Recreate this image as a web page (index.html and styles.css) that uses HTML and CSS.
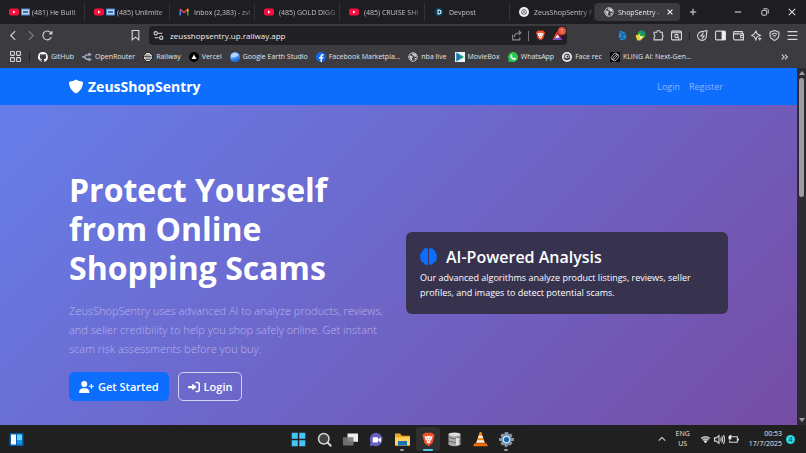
FILE: index.html
```html
<!DOCTYPE html>
<html lang="en">
<head>
<meta charset="utf-8">
<meta name="viewport" content="width=device-width, initial-scale=1">
<title>ZeusShopSentry</title>
<link rel="stylesheet" href="styles.css">
</head>
<body>
<svg class="defs" aria-hidden="true">
  <symbol id="yt" viewBox="0 0 20 14"><rect width="20" height="14" rx="4" fill="#f5103f"/><path d="M8 4l5 3-5 3z" fill="#fff"/></symbol>
  <symbol id="tv" viewBox="0 0 18 14"><rect width="18" height="14" rx="1" fill="#4a86cf"/><rect x="2" y="2" width="14" height="10" fill="#b9d3ee"/><path d="M4 5h10v4H4z" fill="#416fa8"/></symbol>
  <symbol id="globe" viewBox="0 0 20 20"><circle cx="10" cy="10" r="8.5" fill="#3b3b40" stroke="#c4c6ca" stroke-width="2"/><path d="M2 8l5-1 3 3-2 3 1 5-4-3zM9 2l7 2 2 5-5 1-2-3-3-1zM13 12l4 0-3 5z" fill="#c4c6ca"/></symbol>
  <symbol id="brave" viewBox="0 0 20 22"><path d="M5 1h10l2 2 2 1-1 4-2 8-6 5-6-5-2-8-1-4 2-1z" fill="#f4502a"/><path d="M4 6l3 .5 3-1 3 1L16 6l-2 6-2 1 1 2-3 2-3-2 1-2-2-1z" fill="#fff"/><path d="M7 8l2 1-1 2zM13 8l-2 1 1 2zM9 12h2l-1 2z" fill="#f4502a"/></symbol>
</svg>

<header class="browser">
  <div class="tabstrip">
    <div class="tab"><svg class="fav"><use href="#yt"/></svg><svg class="fav tv"><use href="#tv"/></svg><span class="title">(481) He Built</span></div>
    <div class="tab"><svg class="fav"><use href="#yt"/></svg><svg class="fav tv"><use href="#tv"/></svg><span class="title">(485) Unlimite</span></div>
    <div class="tab"><svg class="fav" viewBox="0 0 20 16"><path d="M1 15V3l3 0v12z" fill="#4285f4"/><path d="M16 15V3h3v12z" fill="#34a853"/><path d="M1 3l2-2 7 6 7-6 2 2-9 8z" fill="#ea4335"/><path d="M16 3l2-2 1 2v3l-3 2z" fill="#fbbc04"/></svg><span class="title wide">Inbox (2,383) - zvi</span></div>
    <div class="tab"><svg class="fav"><use href="#yt"/></svg><span class="title wide">(485) GOLD DIGG</span></div>
    <div class="tab"><svg class="fav"><use href="#yt"/></svg><span class="title wide">(485) CRUISE SHI</span></div>
    <div class="tab"><svg class="fav" viewBox="0 0 20 20"><path d="M5 1h10l5 9-5 9H5L0 10z" fill="#003e54"/><path d="M7 5h3a5 5 0 010 10H7zM9 7v6h1a3 3 0 000-6z" fill="#fff"/></svg><span class="title wide">Devpost</span></div>
    <div class="tab"><svg class="fav" viewBox="0 0 20 20"><circle cx="10" cy="10" r="10" fill="#eee"/><g fill="none" stroke="#555" stroke-width="1.5"><circle cx="10" cy="10" r="5"/><path d="M10 5v5l4 3M6 13l4-3"/></g></svg><span class="title wide">ZeusShopSentry F</span></div>
    <div class="tab active"><svg class="fav"><use href="#globe"/></svg><span class="title">ShopSentry -</span><button class="plain" aria-label="Close tab"><svg class="tiny" viewBox="0 0 10 10"><path d="M2 2l6 6M8 2L2 8" stroke="#e4e4e6" stroke-width="1.6"/></svg></button></div>
    <button class="plain newtab" aria-label="New tab"><svg class="tiny" viewBox="0 0 10 10"><path d="M5 1v8M1 5h8" stroke="#ddd" stroke-width="1.3"/></svg></button>
    <div class="winctl">
      <button class="plain" aria-label="Minimize"><svg class="tiny" viewBox="0 0 10 10"><path d="M1 5h8" stroke="#ddd" stroke-width="1.3"/></svg></button>
      <button class="plain" aria-label="Restore"><svg class="tiny" viewBox="0 0 10 10" fill="none" stroke="#ddd" stroke-width="1.2"><rect x="1" y="3" width="6" height="6" rx="1"/><path d="M3 1h5l1 1v5"/></svg></button>
      <button class="plain" aria-label="Close"><svg class="tiny" viewBox="0 0 10 10"><path d="M1 1l8 8M9 1L1 9" stroke="#ddd" stroke-width="1.3"/></svg></button>
    </div>
  </div>

  <div class="toolbar">
    <div class="navbtns">
      <button class="plain" aria-label="Back"><svg class="ic" viewBox="0 0 20 20"><path d="M13 2L5 10l8 8" class="ln"/></svg></button>
      <button class="plain dim" aria-label="Forward"><svg class="ic" viewBox="0 0 20 20"><path d="M7 2l8 8-8 8" class="ln"/></svg></button>
      <button class="plain" aria-label="Reload"><svg class="ic" viewBox="0 0 20 20"><path d="M17 13a8 8 0 11-1-8l2 2M18 2v5h-5" class="ln"/></svg></button>
    </div>
    <button class="plain mark" aria-label="Bookmark"><svg class="ic" viewBox="0 0 20 20"><path d="M4 1h12v17l-6-5-6 5z" class="ln"/></svg></button>
    <div class="address">
      <svg class="ic" viewBox="0 0 20 20"><g class="ln"><circle cx="5" cy="6" r="3"/><path d="M9 6h8M3 14h7"/><circle cx="15" cy="14" r="3"/></g></svg>
      <input class="url" type="text" aria-label="Address" value="zeusshopsentry.up.railway.app">
      <svg class="ic share" viewBox="0 0 20 20"><path d="M3 8v10h13v-5M6 13c0-6 4-8 12-8M14 1l4 4-4 4" class="ln"/></svg>
      <span class="rule"></span>
      <svg class="ic"><use href="#brave"/></svg>
      <span class="rewards"><svg class="ic" viewBox="0 0 20 20"><path d="M10 1L1 18l9-5z" fill="#ff4724"/><path d="M10 1l9 17-9-5z" fill="#9e1f63"/><path d="M1 18l9-6 9 6z" fill="#7654d8"/><path d="M10 8l4 6H6z" fill="#fff"/></svg><span class="badge">1</span></span>
    </div>
    <div class="exts">
      <svg class="ic" viewBox="0 0 20 20"><path d="M5 1l9 3 3 7-2 7H7l-4-6z" fill="#268bce"/><path d="M6 3l5 6-3 5 7 3M11 9l4-2" stroke="#123f68" stroke-width="1.5" fill="none"/></svg>
      <svg class="ic" viewBox="0 0 20 20"><circle cx="12" cy="8" r="7" fill="#25a83a"/><path d="M1 10l8-3v4l8 1-7 7H4z" fill="#e7d637"/><circle cx="14" cy="5" r="3" fill="#1676cf"/><path d="M8 12h6l-4 5z" fill="#fff"/></svg>
      <svg class="ic" viewBox="0 0 20 20"><path d="M2 4h5a3 3 0 016 0h4v5a3 3 0 010 5v4H2v-5a3 3 0 000-5z" class="ln"/></svg>
      <svg class="ic" viewBox="0 0 20 20"><g class="ln"><rect x="1" y="2" width="18" height="16" rx="2"/><path d="M1 5h18M12 13l3 3"/><circle cx="10" cy="11" r="3"/></g></svg>
      <span class="rule dark"></span>
      <svg class="ic" viewBox="0 0 20 20"><path d="M18 1L10 3a8 8 0 107 7zM12 5l-5 6h6l-4 5" class="ln"/></svg>
      <svg class="ic" viewBox="0 0 20 20"><rect x="1" y="2" width="18" height="16" rx="2" class="ln"/><path d="M12 2h7v16h-7z" fill="#eee"/></svg>
      <svg class="ic" viewBox="0 0 20 20"><path d="M17 6V3H3a2 2 0 000 4h16v11H3l-2-2V5M19 10h-5v4h5" class="ln"/></svg>
      <svg class="ic" viewBox="0 0 20 20"><path d="M9 2l2 5 6 3-6 2-2 6-3-6-5-2 5-3zM16 13v6M13 16h6" class="ln"/></svg>
      <svg class="ic" viewBox="0 0 20 20"><g class="ln"><path d="M10 1l8 3v6q0 5-8 9-8-4-8-9V4z"/><path d="M5 8q5-4 10 0M7 11q3-2 6 0M10 13v1"/></g></svg>
      <button class="plain" aria-label="Menu"><svg class="ic" viewBox="0 0 20 20"><path d="M1 3h18M1 10h18M1 17h18" class="ln"/></svg></button>
    </div>
  </div>

  <nav class="bookmarks" aria-label="Bookmarks">
    <svg class="ic" viewBox="0 0 20 20"><g class="ln"><rect x="1" y="1" width="7" height="7" rx="1"/><rect x="12" y="1" width="7" height="7" rx="1"/><rect x="1" y="12" width="7" height="7" rx="1"/><rect x="12" y="12" width="7" height="7" rx="1"/></g></svg>
    <span class="rule dark"></span>
    <a href="#"><svg class="fav" viewBox="0 0 16 16"><path fill="#fff" d="M8 0a8 8 0 00-2.500 15.600c.4.100.5-.2.500-.4v-1.400c-2.200.5-2.700-1-2.700-1-.4-.9-.9-1.200-.9-1.200-.7-.5.1-.5.1-.5.800.1 1.200.8 1.200.8.700 1.300 1.900.9 2.300.7.100-.5.300-.9.500-1.100-1.800-.2-3.600-.9-3.600-4 0-.9.300-1.600.8-2.100-.1-.2-.4-1 .1-2.100 0 0 .7-.2 2.200.8a7.500 7.500 0 014 0c1.500-1 2.200-.8 2.200-.8.400 1.100.2 1.900.1 2.100.5.600.8 1.300.8 2.100 0 3.100-1.900 3.700-3.700 3.900.3.300.6.800.6 1.500v2.200c0 .2.100.5.500.4A8 8 0 008 0z"/></svg>GitHub</a>
    <a href="#"><svg class="fav" viewBox="0 0 20 20"><path d="M0 10h4q4-5 10-5M4 10q4 5 10 5" fill="none" stroke="#9dabc3" stroke-width="3"/><path d="M13 1l7 4-7 4zM13 11l7 4-7 4z" fill="#9dabc3"/></svg>OpenRouter</a>
    <a href="#"><svg class="fav" viewBox="0 0 20 20"><circle cx="10" cy="10" r="9" fill="#fff" stroke="#17171a" stroke-width="2"/><path d="M3 6h12M2 9h15M4 12h13M5 15h10" stroke="#222" stroke-width="1.500"/></svg>Railway</a>
    <a href="#"><svg class="fav" viewBox="0 0 20 20"><circle cx="10" cy="10" r="10" fill="#000"/><path d="M10 5l5 9H5z" fill="#fff"/></svg>Vercel</a>
    <a href="#"><svg class="fav" viewBox="0 0 20 20"><circle cx="10" cy="10" r="10" fill="#4a8ff0"/><path d="M2 5q8-7 16 0-5 7-16 6z" fill="#b5d6ff"/><path d="M3 16q9 0 16-7 1 9-7 11-6 0-9-4z" fill="#286bd8"/></svg>Google Earth Studio</a>
    <a href="#"><svg class="fav" viewBox="0 0 20 20"><circle cx="10" cy="10" r="10" fill="#1467ed"/><path d="M9 20v-7H6v-3h3V8q0-4 4-4h2v3h-1q-2 0-2 2v1h3l-.5 3H12v7z" fill="#fff"/></svg>Facebook Marketpla...</a>
    <a href="#"><svg class="fav"><use href="#globe"/></svg>nba live</a>
    <a href="#"><svg class="fav" viewBox="0 0 20 20"><path d="M0 0h20v20H0z" fill="#e7f5f8"/><path d="M3 1l15 9-15 9z" fill="#16a66d"/><path d="M3 1l8 9-8 9z" fill="#2469dc"/></svg>MovieBox</a>
    <a href="#"><svg class="fav" viewBox="0 0 20 20"><path d="M0 20l1.500-5A10 10 0 1110 20q-3 0-5-1z" fill="#28c850"/><path d="M6 5q2-1 3 3l-1 1q1 3 4 4l1-2 3 2q0 3-3 3-4 0-7-4-3-4 0-7z" fill="#fff"/></svg>WhatsApp</a>
    <a href="#"><svg class="fav" viewBox="0 0 20 20"><circle cx="10" cy="10" r="10" fill="#eee"/><circle cx="10" cy="9" r="5" fill="none" stroke="#222" stroke-width="2"/><path d="M3 12q7 7 14 0" fill="none" stroke="#222" stroke-width="2"/><circle cx="11" cy="9" r="2" fill="#222"/></svg>Face rec</a>
    <a href="#"><svg class="fav" viewBox="0 0 20 20"><rect width="20" height="20" rx="2" fill="#050505"/><g fill="none" stroke="#ccc" stroke-width="1.500" transform="rotate(40 10 10)"><ellipse cx="8" cy="10" rx="4" ry="8"/><ellipse cx="12" cy="10" rx="4" ry="8"/></g></svg>KLING AI: Next-Gen...</a>
    <button class="plain more" aria-label="More bookmarks"><svg class="tiny" viewBox="0 0 10 10"><path d="M1 2l3 3-3 3M5 2l3 3-3 3" fill="none" stroke="#ddd" stroke-width="1.300"/></svg></button>
  </nav>
</header>

<div class="view">
  <div class="page">
    <nav class="sitenav">
      <div class="container navrow">
        <a class="brand" href="#"><svg class="shield" viewBox="0 0 28 30"><path d="M14 1q6 4 12 4 2 0 2 3-1 14-14 21Q1 22 0 8q0-3 2-3 6 0 12-4z" fill="#fff"/></svg>ZeusShopSentry</a>
        <div class="links"><a href="#">Login</a><a href="#">Register</a></div>
      </div>
    </nav>
    <main class="hero">
      <div class="container cols">
        <section>
          <h1>Protect Yourself from Online Shopping Scams</h1>
          <p class="lead">ZeusShopSentry uses advanced AI to analyze products, reviews, and seller credibility to help you shop safely online. Get instant scam risk assessments before you buy.</p>
          <div class="actions">
            <a class="btn primary" href="#"><svg class="bic wideic" viewBox="0 0 640 512"><path fill="#fff" d="M96 128a128 128 0 11256 0 128 128 0 11-256 0zM0 482c0-98 80-178 178-178h92c98 0 178 80 178 178 0 17-13 30-30 30H30c-17 0-30-13-30-30zM504 312v-64h-64a24 24 0 010-48h64v-64a24 24 0 0148 0v64h64a24 24 0 010 48h-64v64a24 24 0 01-48 0z"/></svg>Get Started</a>
            <a class="btn outline" href="#"><svg class="bic" viewBox="0 0 512 512"><path fill="#fff" d="M217 377L345 273q12-17 0-34L217 135c-12-10-41-8-41 19v54H32c-18 0-32 14-32 32v32c0 18 14 32 32 32h144v54c0 27 29 29 41 19zM352 416h64c18 0 32-14 32-32V128c0-18-14-32-32-32h-64a32 32 0 010-64h64c53 0 96 43 96 96v256c0 53-43 96-96 96h-64a32 32 0 010-64z"/></svg>Login</a>
          </div>
        </section>
        <aside class="card">
          <h2><svg class="brain" viewBox="0 0 34 34"><path fill="#0d6efd" d="M16 3v28q0 3-4 3-4-1-5-5-5 0-5-5-3-3-1-7-2-5 2-7 0-5 4-6 1-4 5-4 4 0 4 3zM18 3v28q0 3 4 3 4-1 5-5 5 0 5-5 3-3 1-7 2-5-2-7 0-5-4-6-1-4-5-4-4 0-4 3z"/></svg>AI-Powered Analysis</h2>
          <p>Our advanced algorithms analyze product listings, reviews, seller profiles, and images to detect potential scams.</p>
        </aside>
      </div>
    </main>
  </div>
  <div class="scroll" aria-hidden="true"><span class="arrow up"></span><span class="thumb"></span><span class="arrow down"></span></div>
</div>

<footer class="taskbar">
  <svg class="widget" viewBox="0 0 28 26"><rect width="28" height="26" rx="2" fill="#075ea9"/><path d="M3 3h10v20H3z" fill="#f4faff"/><path d="M15 3h10v11H15z" fill="#65d3ff"/><path d="M15 14h10v9H15z" fill="#1595e8"/></svg>
  <div class="apps">
    <button class="app" aria-label="Start"><svg viewBox="0 0 20 20"><path d="M1 1h8v8H1zM11 1h8v8h-8zM1 11h8v8H1zM11 11h8v8h-8z" fill="#43c4fa"/></svg></button>
    <button class="app" aria-label="Search"><svg viewBox="0 0 20 20" fill="none"><circle cx="9" cy="9" r="7" fill="#444" stroke="#d8d8d8" stroke-width="2"/><path d="M14 14l5 5" stroke="#d8d8d8" stroke-width="2.500"/></svg></button>
    <button class="app" aria-label="Task view"><svg viewBox="0 0 20 20"><path d="M6 2h14v11H6z" fill="#eee"/><path d="M0 7h14v11H0z" fill="#777" fill-opacity=".9"/></svg></button>
    <button class="app" aria-label="Chat"><svg viewBox="0 0 20 20"><path d="M10 1a9 9 0 11-5 17l-4 1 1-5a9 9 0 018-13z" fill="#6462bf"/><rect x="5" y="7" width="7" height="7" rx="1" fill="#fff"/><path d="M12 10l4-3v7l-4-3z" fill="#fff"/></svg></button>
    <button class="app open" aria-label="Files"><svg viewBox="0 0 20 20"><path d="M0 2h7l2 3h11v13H0z" fill="#e9a92b"/><path d="M0 7h20v11H0z" fill="#ffd25b"/><path d="M4 12h12v6H4z" fill="#1775b6"/></svg></button>
    <button class="app open current" aria-label="Brave"><svg><use href="#brave"/></svg></button>
    <button class="app" aria-label="Database"><svg viewBox="0 0 20 20"><path d="M2 3v14q8 4 16 0V3z" fill="#aaa"/><ellipse cx="10" cy="3" rx="8" ry="2.500" fill="#ddd"/><path d="M2 7q8 4 16 0M2 12q8 4 16 0" fill="none" stroke="#555"/><path d="M12 8v10l4-1V8z" fill="#ddd"/></svg></button>
    <button class="app" aria-label="Player"><svg viewBox="0 0 20 20"><path d="M9 0h2l5 15H4z" fill="#f58a1f"/><path d="M7.500 5h5l1 3h-7zM5.500 11h9l1 3h-11z" fill="#eee"/><path d="M2 15h16l2 4H0z" fill="#e96d13"/></svg></button>
    <button class="app open" aria-label="Settings"><svg viewBox="0 0 20 20"><path d="M8 0h4l1 3 3-1 2 3-2 3h4v4h-4l2 3-3 3-3-1-1 3H8l-1-3-3 1-2-3 2-3H0V8h4L2 5l2-3 3 1z" fill="#8297a8"/><circle cx="10" cy="10" r="5" fill="#d6e8f5"/><circle cx="10" cy="10" r="3.500" fill="#1766b1"/></svg></button>
  </div>
  <div class="tray">
    <svg class="tiny" viewBox="0 0 10 10"><path d="M1 7l4-4 4 4" fill="none" stroke="#ddd" stroke-width="1.300"/></svg>
    <span class="lang">ENG<br>US</span>
    <span class="status">
      <svg class="ic" viewBox="0 0 20 20"><path d="M1 7q9-7 18 0l-9 10z" fill="#777"/><path d="M2 8q8-6 16 0M5 11q5-4 10 0" fill="none" stroke="#eee" stroke-width="1.500"/><path d="M7 13q3-2 6 0l-3 4z" fill="#eee"/></svg>
      <svg class="ic" viewBox="0 0 20 20"><path d="M1 7h3l5-4v14l-5-4H1zM12 7q2 3 0 6M14 4q4 6 0 12M17 2q5 8 0 16" class="ln"/></svg>
      <svg class="ic" viewBox="0 0 20 20"><path d="M5 5h12v10H3v-3M19 8v4" class="ln"/><path d="M1 4l5-3v9H1z" fill="#eee"/></svg>
    </span>
    <span class="clock">00:53<br>17/7/2025</span>
    <span class="count">4</span>
  </div>
</footer>
</body>
</html>
```
FILE: styles.css
```css
* { box-sizing: border-box; }
body {
  margin: 0;
  height: 100vh;
  display: flex;
  flex-direction: column;
  overflow: hidden;
  font-family: "Open Sans", "Noto Sans", sans-serif;
  font-size: 7px;
  color: #e4e4e6;
  background: #202020;
}
a { color: inherit; text-decoration: none; }
svg { display: block; flex: none; }
.defs { position: absolute; width: 0; height: 0; }
.plain { display: flex; padding: 0; border: 0; background: none; color: inherit; }
.fav { width: 10px; height: 10px; }
.tab .tv { width: 9px; height: 8px; }
.ic { width: 11px; height: 11px; }
.tiny { width: 8px; height: 8px; }
.ln { fill: none; stroke: #d6d6d9; stroke-width: 2; }
.dim { opacity: .45; }
.rule { width: 1px; height: 10px; background: #77777c; }
.rule.dark { background: #232327; }

.browser { background: #3b3b40; }
.tabstrip { display: flex; align-items: center; height: 24px; background: #1e1e22; }
.tab {
  display: flex;
  flex: 0 1 85px;
  align-items: center;
  gap: 2px;
  height: 18px;
  padding-left: 9px;
  border-right: 1px solid #303035;
  min-width: 0;
}
.title {
  flex: 1;
  white-space: nowrap;
  color: #c3c3c7;
  mask-image: linear-gradient(to right, #000 75%, rgb(0 0 0 / 20%));
}
.title.wide { margin-left: 3px; }
.tab.active { border: 0; border-radius: 4px; background: #3b3b40; padding-right: 6px; }
.active .title { color: #eee; margin-left: 2px; }
.newtab { margin-left: 9px; }
.winctl { display: flex; gap: 19px; margin-left: auto; padding-right: 10px; }

.toolbar { display: flex; align-items: center; height: 23px; padding: 0 8px; }
.navbtns { display: flex; flex: 0 0 122px; gap: 6px; }
.mark { margin-right: 8px; }
.address {
  display: flex;
  align-items: center;
  flex: 0 1 418px;
  gap: 6px;
  height: 19px;
  padding: 0 4px;
  border-radius: 4px;
  background: #202025;
}
.url {
  flex: 1;
  min-width: 0;
  padding: 0;
  border: 0;
  background: none;
  color: #eee;
  font: 8px "Open Sans", sans-serif;
}
.share { opacity: .6; }
.rewards { position: relative; }
.badge {
  position: absolute;
  top: -3px;
  right: -3px;
  width: 8px;
  height: 8px;
  border-radius: 50%;
  background: #e9503b;
  font-size: 6px;
  line-height: 8px;
  text-align: center;
}
.exts { display: flex; align-items: center; gap: 7px; margin-left: auto; }

.bookmarks { display: flex; align-items: center; gap: 8px; height: 21px; padding: 0 17px 2px 10px; white-space: nowrap; }
.bookmarks a { display: flex; align-items: center; gap: 3px; }
.more { margin-left: auto; }

.view { display: flex; flex: 1; min-height: 0; }
.page { flex: 1; overflow: hidden; }
.container { margin: 0 69px; }
.sitenav { background: #0d6efd; overflow: hidden; }
.navrow { display: flex; align-items: center; justify-content: space-between; height: 37px; }
.brand { display: flex; align-items: center; gap: 5px; font-size: 14px; font-weight: 700; color: #fff; }
.shield { width: 14px; height: 15px; }
.links { display: flex; gap: 9px; padding-right: 5px; font-size: 9px; color: #86b6fe; }
.hero { padding: 65px 0; background: linear-gradient(135deg, #667eea, #764ba2); color: #fff; }
.cols { display: grid; grid-template-columns: 1fr 1fr; gap: 15px; align-items: center; }
h1 { margin: 0 0 14px; font-size: 32px; line-height: 39px; font-weight: 700; }
.lead { margin: 0 0 14px; font-size: 11px; line-height: 19px; font-weight: 300; color: #b9b3ec; }
.actions { display: flex; gap: 9px; }
.btn {
  display: flex;
  align-items: center;
  gap: 4px;
  height: 29px;
  padding: 0 9px;
  border: 1px solid #0d6efd;
  border-radius: 5px;
  font-size: 11px;
  font-weight: 600;
}
.primary { background: #0d6efd; }
.outline { border-color: #d5d0f2; }
.bic { width: 12px; height: 12px; }
.wideic { width: 15px; }
.card { margin-bottom: 26px; padding: 14px; border-radius: 6px; background: #37334f; }
.card h2 { display: flex; align-items: center; gap: 9px; margin: 0; font-size: 16px; line-height: 22px; font-weight: 600; }
.brain { width: 17px; height: 17px; }
.card p { margin: 2px 0 0; font-size: 9px; line-height: 15px; }

.scroll { display: flex; flex-direction: column; align-items: center; width: 9px; padding: 3px 0; background: #2c2c30; }
.arrow { border: 3px solid transparent; }
.up { border-top: 0; border-bottom: 4px solid #a0a0a3; }
.down { border-bottom: 0; border-top: 4px solid #a0a0a3; margin-top: auto; }
.thumb { width: 5px; height: 34%; margin-top: 3px; border-radius: 3px; background: #9c9c9f; }

.taskbar {
  display: grid;
  grid-template-columns: 1fr auto 1fr;
  align-items: center;
  height: 28px;
  padding: 0 11px 0 9px;
  background: #202020;
}
.widget { width: 15px; height: 13px; }
.apps { display: flex; gap: 2px; }
.app {
  position: relative;
  display: grid;
  place-items: center;
  width: 24px;
  height: 24px;
  padding: 0;
  border: 0;
  border-radius: 3px;
  background: none;
}
.app svg { width: 15px; height: 15px; }
.current { background: #303030; }
.open::after {
  content: "";
  position: absolute;
  bottom: 0;
  left: 50%;
  width: 4px;
  height: 2px;
  border-radius: 1px;
  background: #999;
  transform: translateX(-50%);
}
.current::after { width: 10px; background: #4cc8e8; }
.tray { display: flex; align-items: center; justify-content: flex-end; gap: 10px; line-height: 10px; }
.lang { text-align: center; }
.status { display: flex; gap: 3px; }
.clock { text-align: right; }
.count {
  width: 9px;
  height: 9px;
  margin-left: -6px;
  border-radius: 50%;
  background: #29d7e5;
  color: #143b40;
  line-height: 9px;
  text-align: center;
}
```
